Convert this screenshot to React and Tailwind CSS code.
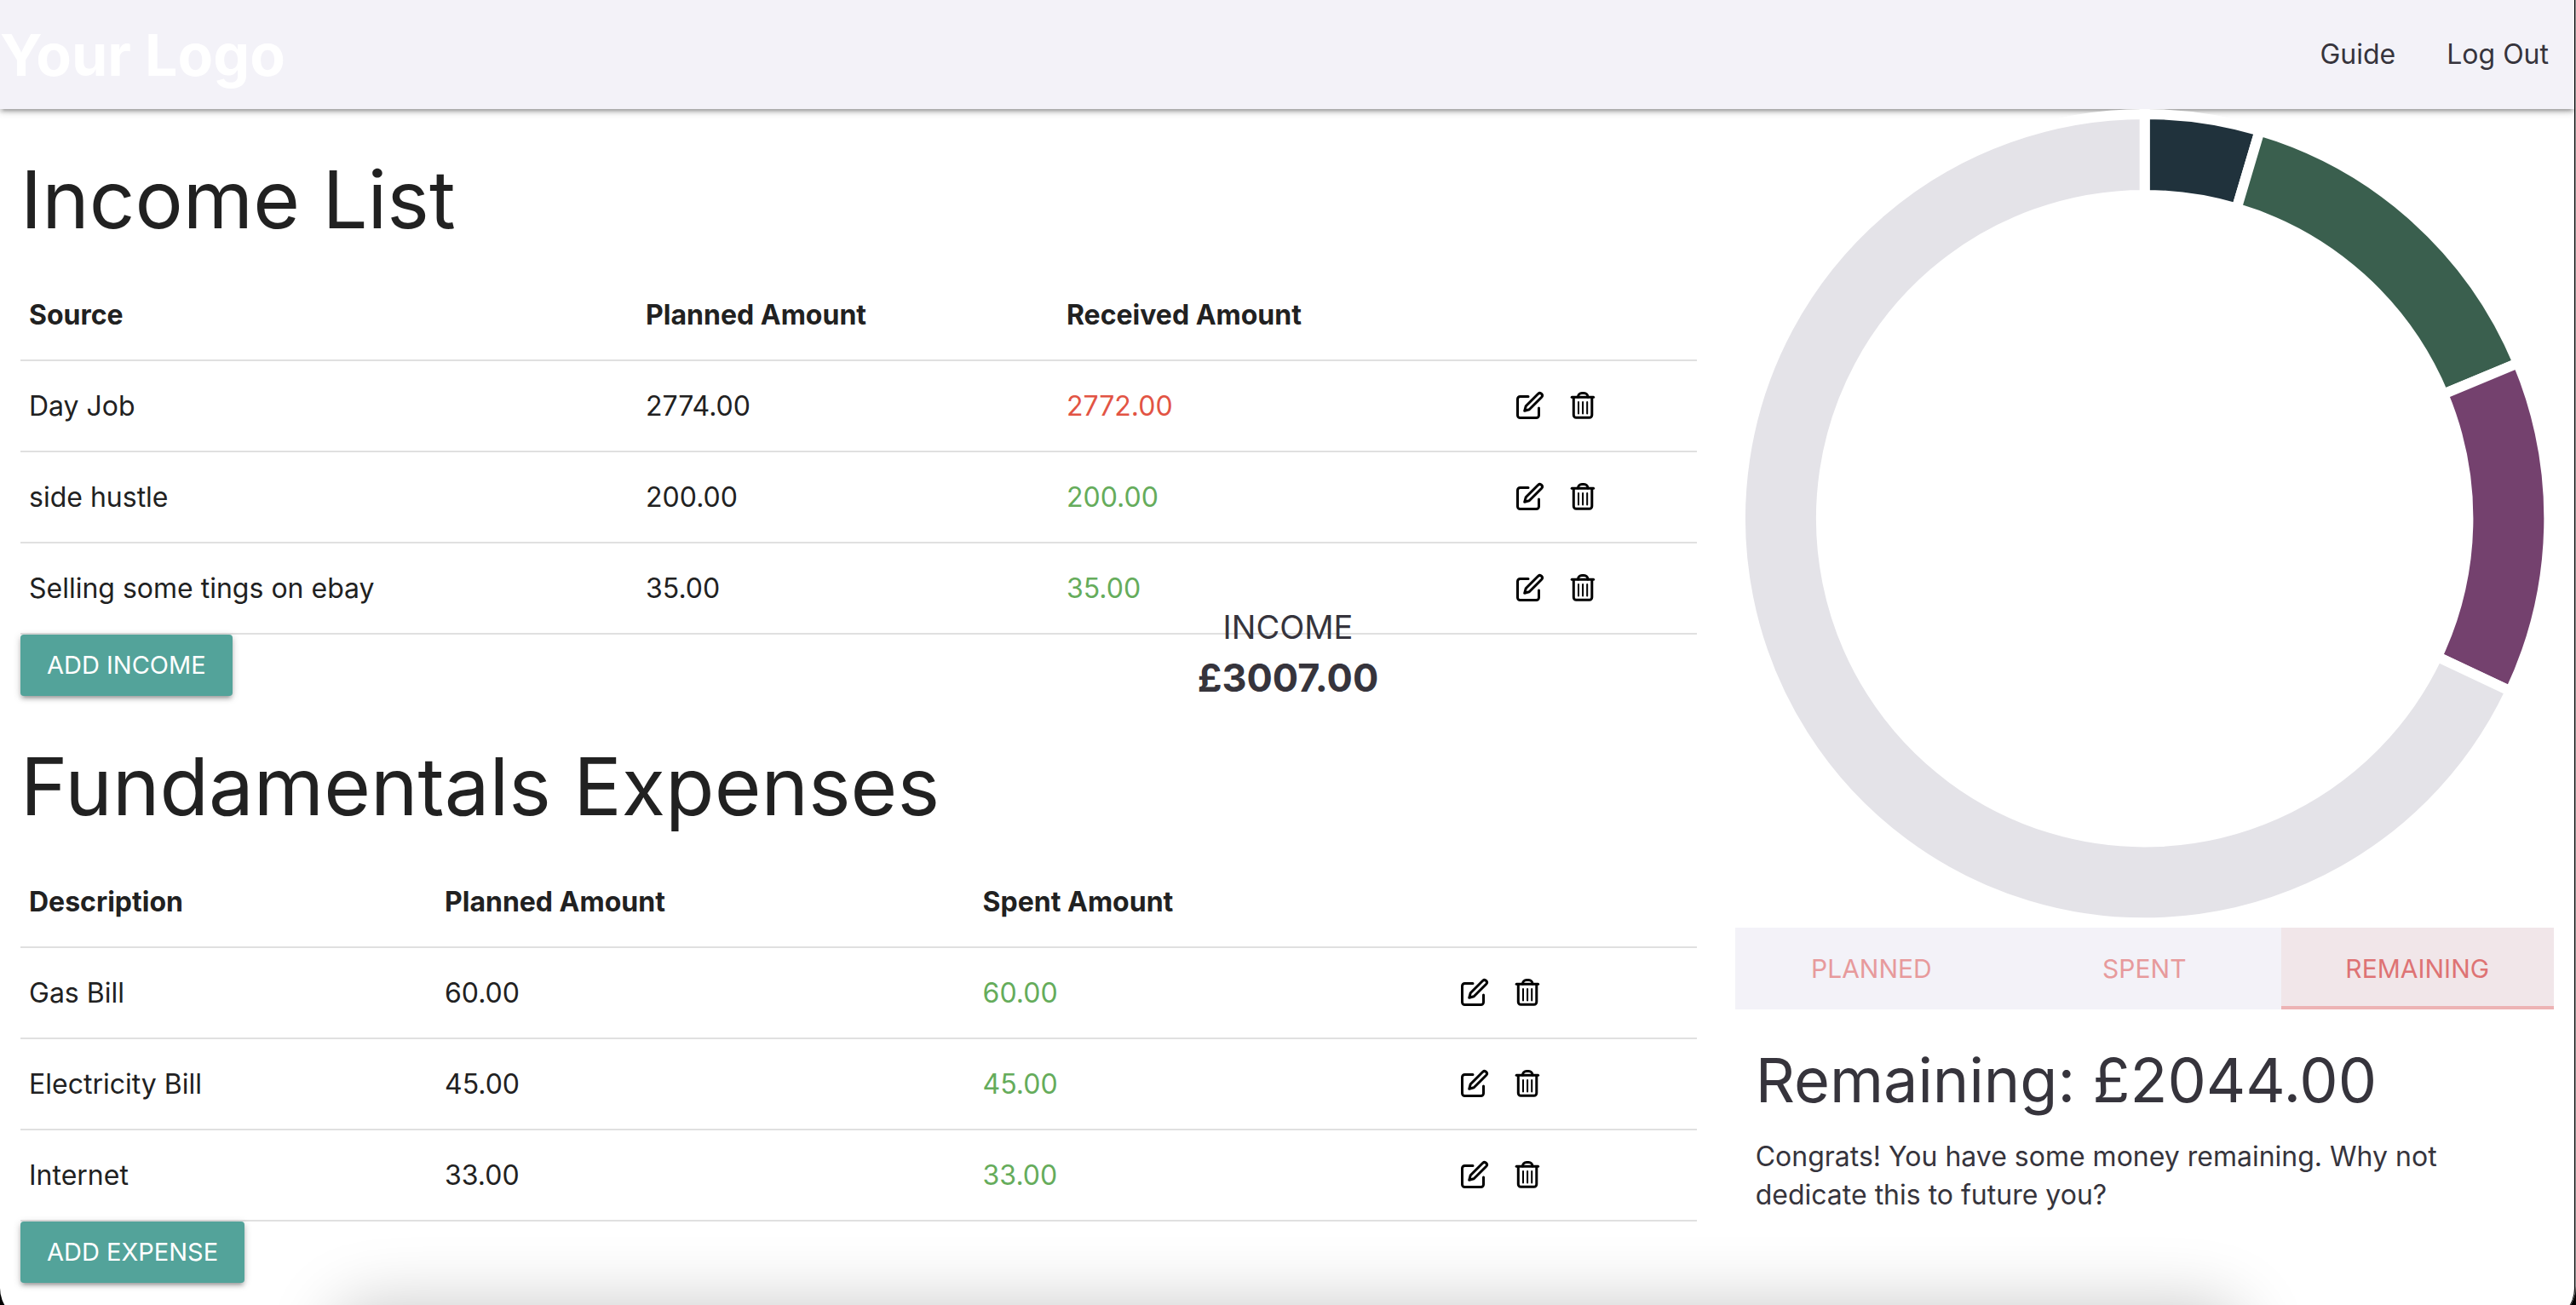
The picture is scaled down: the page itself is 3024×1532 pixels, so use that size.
import React, { useState } from 'react';

const INCOME = {
  title: 'Income List',
  headers: ['Source', 'Planned Amount', 'Received Amount'],
  columns: ['w-[36.8%]', 'w-[25.1%]', 'w-[26.8%]', 'w-[11.3%]'],
  action: 'Add Income',
  rows: [
    { name: 'Day Job', planned: '2774.00', actual: '2772.00', short: true },
    { name: 'side hustle', planned: '200.00', actual: '200.00' },
    { name: 'Selling some tings on ebay', planned: '35.00', actual: '35.00' },
  ],
};

const EXPENSES = {
  title: 'Fundamentals Expenses',
  headers: ['Description', 'Planned Amount', 'Spent Amount'],
  columns: ['w-[24.8%]', 'w-[32.1%]', 'w-[28.5%]', 'w-[14.6%]'],
  action: 'Add Expense',
  rows: [
    { name: 'Gas Bill', planned: '60.00', actual: '60.00' },
    { name: 'Electricity Bill', planned: '45.00', actual: '45.00' },
    { name: 'Internet', planned: '33.00', actual: '33.00' },
  ],
};

const SLICES = [
  { value: 138, color: '#20323c' },
  { value: 425, color: '#3a5f4e' },
  { value: 400, color: '#74416e' },
  { value: 2044, color: '#e4e3e8' },
];

const TABS = ['Planned', 'Spent', 'Remaining'];

function EditIcon() {
  return (
    <svg viewBox="0 0 36 36" className="size-9" fill="none" stroke="#000" strokeWidth="3" strokeLinecap="round" strokeLinejoin="round" aria-hidden="true">
      <path d="M15 7.5H5.500a3 3 0 0 0-3 3v19a3 3 0 0 0 3 3h19a3 3 0 0 0 3-3V21" />
      <path d="M10.7 24.3 12.2 18.8 26.7 4.3a2.83 2.83 0 0 1 4 4L16.2 22.8Z" />
    </svg>
  );
}

function TrashIcon() {
  return (
    <svg viewBox="0 0 36 36" className="size-9" fill="none" stroke="#000" strokeWidth="3" strokeLinecap="round" strokeLinejoin="round" aria-hidden="true">
      <path d="M5.2 8.3h25.4" />
      <path d="M12.5 8a4.5 4.5 0 0 1 4.5-4.5h2.5a4.5 4.5 0 0 1 4.5 4.5" />
      <path d="M7.3 8.5V29.3a3 3 0 0 0 3 3h15.5a3 3 0 0 0 3-3V8.5" />
      <path d="M13 14v13.5M18.1 14v13.5M23.2 14v13.5" strokeWidth="2" />
    </svg>
  );
}

function BudgetTable({ data }) {
  return (
    <section className="pt-[58px]">
      <h2 className="mb-[35px] text-[94px] leading-[96px]">{data.title}</h2>
      <table className="w-full table-fixed border-collapse text-left text-[32px] leading-[45px]">
        <thead>
          <tr className="border-b-2 border-[#e0e0e0]">
            {data.headers.map((label, i) => (
              <th key={label} scope="col" className={`${data.columns[i]} px-2.5 py-[30px] font-bold`}>
                {label}
              </th>
            ))}
            <td className={data.columns[3]} />
          </tr>
        </thead>
        <tbody>
          {data.rows.map((row) => (
            <tr key={row.name} className="border-b-2 border-[#e0e0e0]">
              <td className="px-2.5 py-[30px]">{row.name}</td>
              <td className="px-2.5 py-[30px]">{row.planned}</td>
              <td className={`px-2.5 py-[30px] ${row.short ? 'text-[#e25444]' : 'text-[#65ac5b]'}`}>{row.actual}</td>
              <td className="px-2.5 pb-0.5">
                <div className="flex items-center gap-[25px]">
                  <button type="button" aria-label={`Edit ${row.name}`}>
                    <EditIcon />
                  </button>
                  <button type="button" aria-label={`Delete ${row.name}`}>
                    <TrashIcon />
                  </button>
                </div>
              </td>
            </tr>
          ))}
        </tbody>
      </table>
      <button
        type="button"
        className="block h-[72px] rounded bg-[#53a39a] px-[31px] text-[29px] text-white uppercase shadow-[0_4px_4px_0_rgba(0,0,0,0.14),0_6px_2px_-4px_rgba(0,0,0,0.12),0_2px_10px_0_rgba(0,0,0,0.2)]"
      >
        {data.action}
      </button>
    </section>
  );
}

function slicePath(from, to) {
  const point = (radius, turn) => {
    const angle = turn * 2 * Math.PI;
    return `${481 + radius * Math.sin(angle)} ${481 - radius * Math.cos(angle)}`;
  };
  const large = to - from > 0.5 ? 1 : 0;
  return `M${point(475, from)}A475 475 0 ${large} 1 ${point(475, to)}L${point(380, to)}A380 380 0 ${large} 0 ${point(380, from)}Z`;
}

function Donut() {
  const total = SLICES.reduce((sum, slice) => sum + slice.value, 0);
  let start = 0;
  return (
    <svg viewBox="0 0 962 962" className="block w-full" role="img" aria-label="Budget breakdown">
      {SLICES.map((slice) => {
        const from = start / total;
        start += slice.value;
        return <path key={slice.color} d={slicePath(from, start / total)} fill={slice.color} stroke="#fff" strokeWidth="12" />;
      })}
    </svg>
  );
}

export default function App() {
  const [tab, setTab] = useState('Remaining');

  return (
    <div className="relative h-screen overflow-hidden bg-black font-['Inter',sans-serif] text-[#212121]">
      <div className="rounded-b-[42px] border-r border-[#9a9a9a]">
        <div className="rounded-b-[41px] border-r border-black bg-black">
          <div className="min-h-[calc(100vh+20px)] overflow-hidden rounded-b-[40px] bg-white">
            <header className="flex h-32 items-center justify-between bg-[#f3f2f8] shadow-[0_4px_4px_0_rgba(0,0,0,0.14),0_6px_2px_-4px_rgba(0,0,0,0.12),0_2px_10px_0_rgba(0,0,0,0.2)]">
              <a href="#home" className="text-[68px] leading-none font-bold text-white">
                Your Logo
              </a>
              <nav className="flex text-[32px] text-[#36343c]">
                <a href="#guide" className="px-[30px]">
                  Guide
                </a>
                <a href="#logout" className="px-[30px]">
                  Log Out
                </a>
              </nav>
            </header>

            <main className="grid grid-cols-3">
              <div className="col-span-2 pr-[23px] pl-6">
                <BudgetTable data={INCOME} />
                <BudgetTable data={EXPENSES} />
              </div>

              <aside className="pr-6 pl-[22px] text-[#36343c]">
                <Donut />
                <div role="tablist" className="grid h-24 grid-cols-3 bg-[#f3f2f8] text-[30px]">
                  {TABS.map((label) => (
                    <button
                      key={label}
                      type="button"
                      role="tab"
                      aria-selected={tab === label}
                      onClick={() => setTab(label)}
                      className={`border-b-4 pt-1 uppercase ${
                        tab === label ? 'border-[#edb3b4] bg-[#f1e6e9] text-[#de7374]' : 'border-transparent text-[#e79a9c]'
                      }`}
                    >
                      {label}
                    </button>
                  ))}
                </div>
                <div role="tabpanel" className="px-6 pt-[45px]">
                  <h3 className="mb-[30px] text-[72px] leading-[75px]">Remaining: £2044.00</h3>
                  <p className="text-[32px] leading-[45px]">
                    Congrats! You have some money remaining. Why not dedicate this to future you?
                  </p>
                </div>
              </aside>
            </main>
          </div>
        </div>
      </div>

      <div className="pointer-events-none absolute inset-0 flex flex-col items-center justify-center text-[#36343c]">
        <span className="text-[38px] leading-[60px]">INCOME</span>
        <strong className="text-[45px] leading-[60px] font-bold">£3007.00</strong>
      </div>

      <div className="pointer-events-none absolute top-full right-[13%] left-[13%] h-40 rounded-[40px] shadow-[0_0_80px_rgba(0,0,0,0.22)]" />
    </div>
  );
}
